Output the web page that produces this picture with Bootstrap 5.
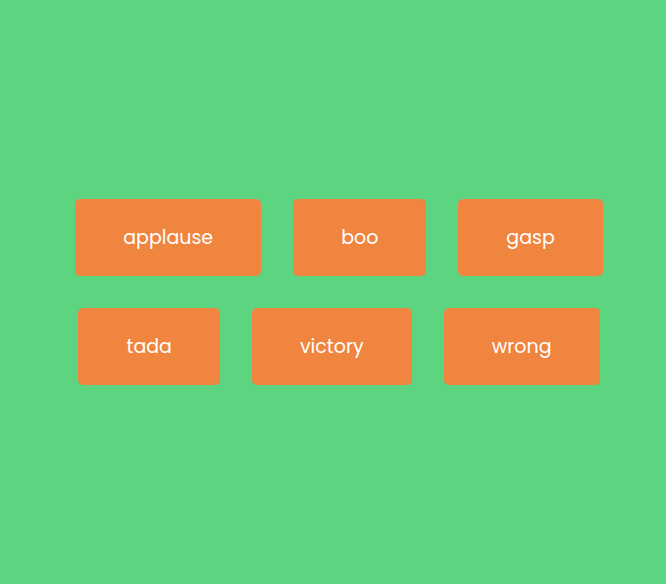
<!DOCTYPE html>
<html lang="en">
<head>
<meta charset="utf-8">
<meta name="viewport" content="width=device-width, initial-scale=1">
<title>Sound Board</title>
<link rel="stylesheet" href="https://cdn.jsdelivr.net/npm/bootstrap@5.3.0/dist/css/bootstrap.min.css">
<style>
body { background: #5dd480; font-family: Poppins, Inter, "Open Sans", sans-serif; }
.sound-btn {
  --bs-btn-color: #fff;
  --bs-btn-bg: #ef853f;
  --bs-btn-hover-color: #fff;
  --bs-btn-hover-bg: #e2742c;
  --bs-btn-active-color: #fff;
  --bs-btn-active-bg: #d3671f;
  --bs-btn-border-width: 0;
  --bs-btn-border-radius: 5px;
  --bs-btn-font-size: 19px;
  --bs-btn-line-height: 29px;
  --bs-btn-padding-x: 48px;
  --bs-btn-padding-y: 24px;
}
.board { gap: 32px; padding-left: 12px; }
</style>
</head>
<body>
<main class="board min-vh-100 d-flex flex-wrap justify-content-center align-content-center">
  <button type="button" class="btn sound-btn">applause</button>
  <button type="button" class="btn sound-btn">boo</button>
  <button type="button" class="btn sound-btn">gasp</button>
  <button type="button" class="btn sound-btn">tada</button>
  <button type="button" class="btn sound-btn">victory</button>
  <button type="button" class="btn sound-btn">wrong</button>
</main>
<script src="https://cdn.jsdelivr.net/npm/bootstrap@5.3.0/dist/js/bootstrap.bundle.min.js"></script>
</body>
</html>
